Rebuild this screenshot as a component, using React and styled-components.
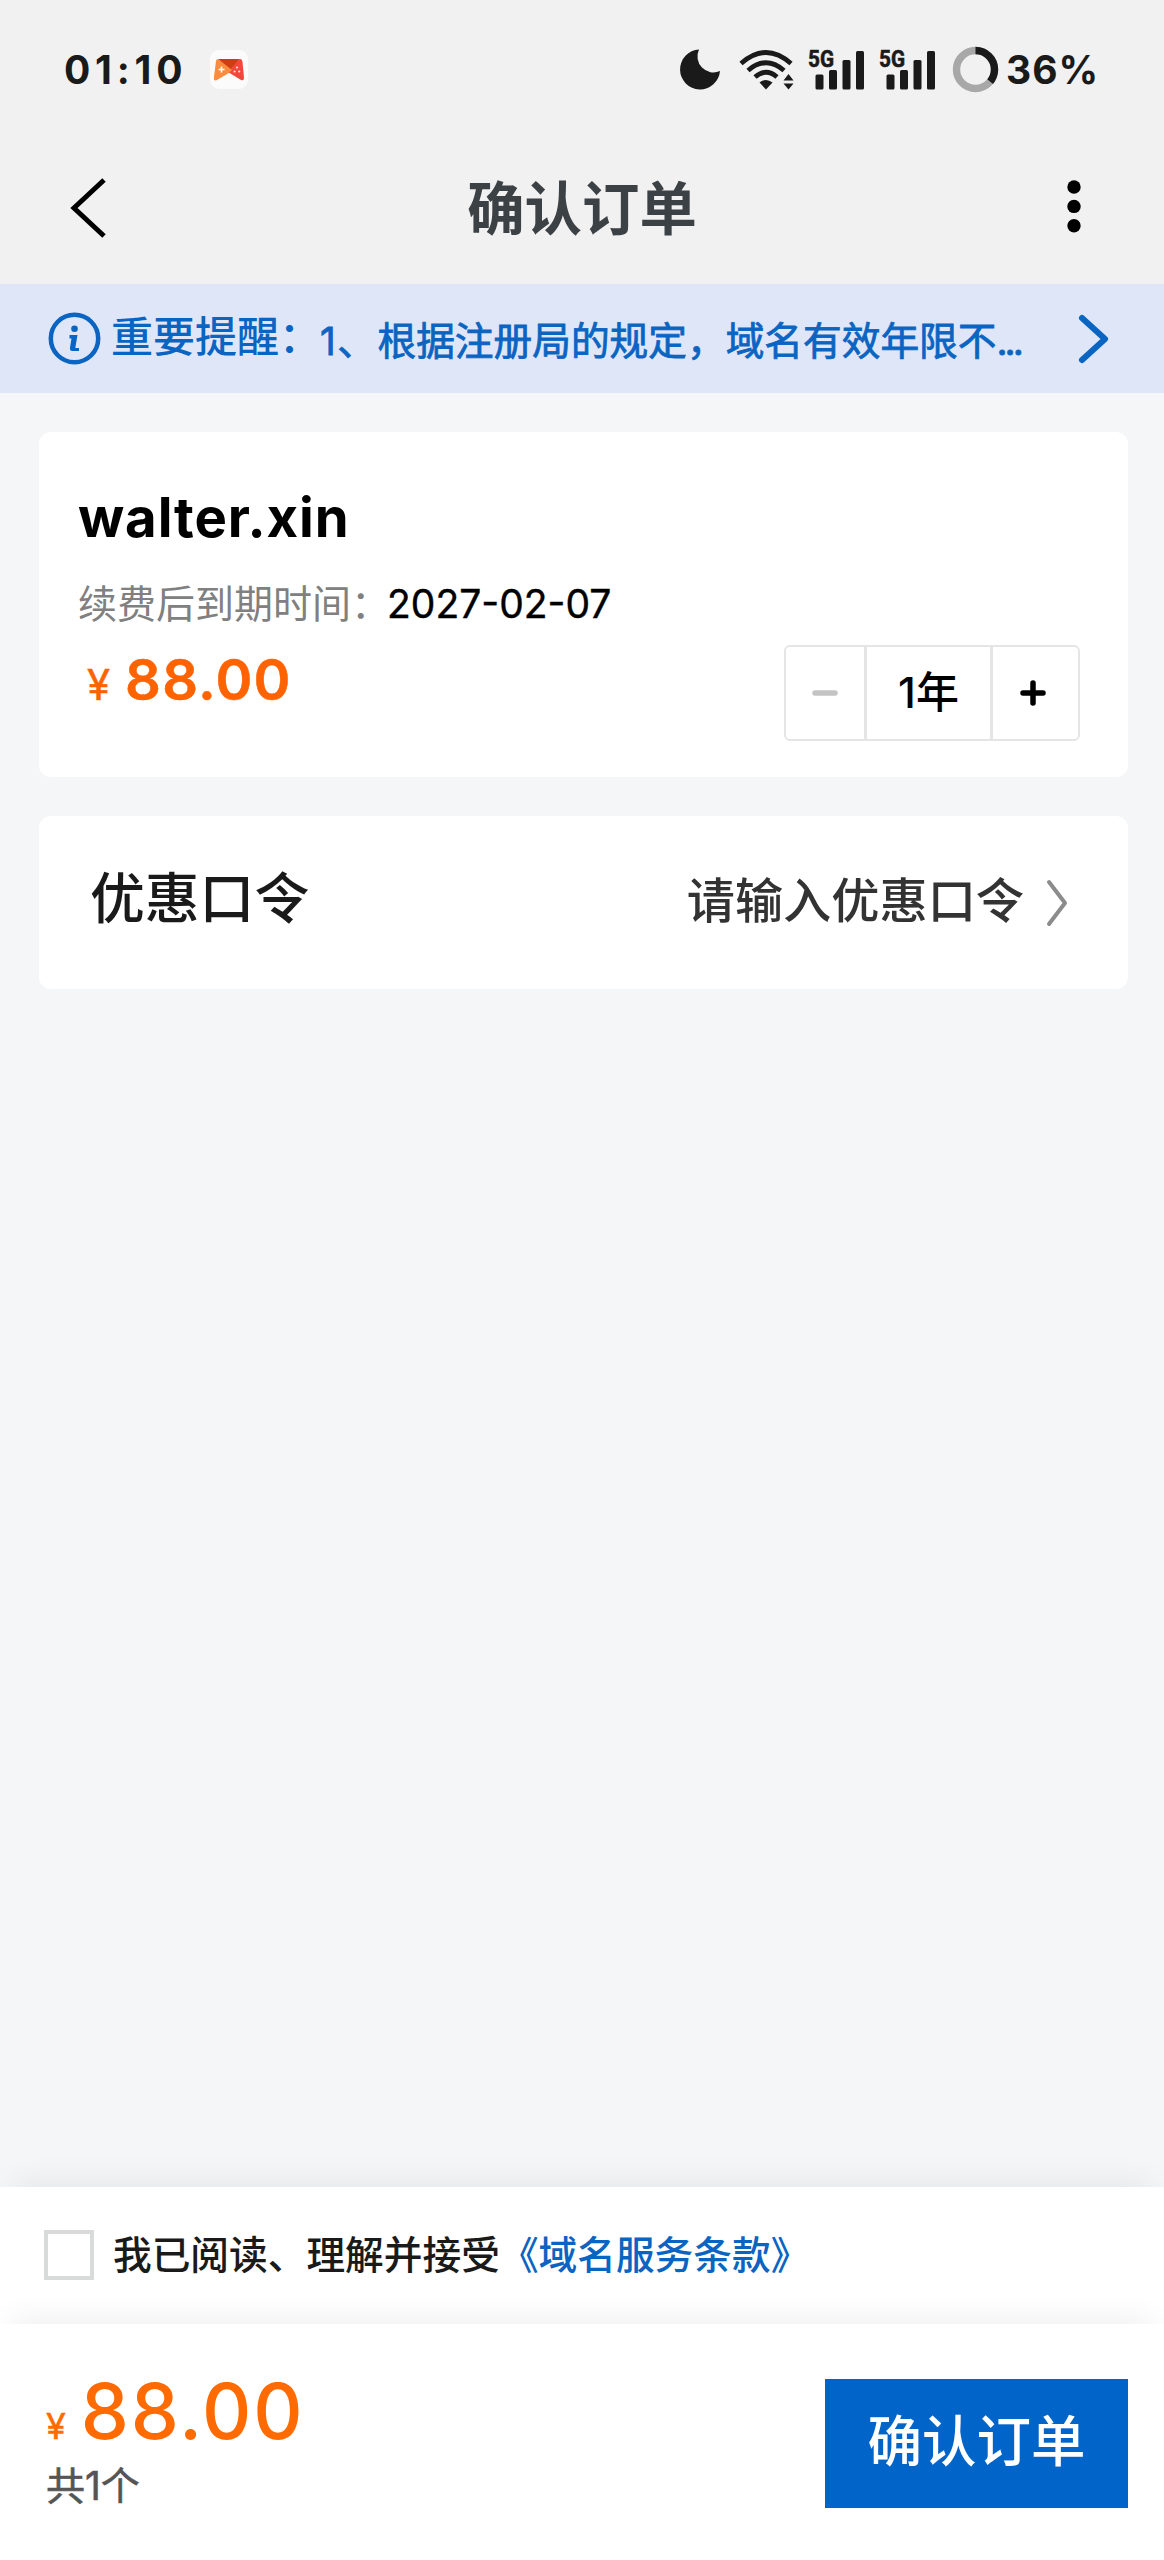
import React, { useState } from "react";
import styled, { createGlobalStyle } from "styled-components";

const GlobalStyle = createGlobalStyle`
  * {
    box-sizing: border-box;
  }
  body {
    margin: 0;
    background: #f5f6f8;
    font-family: Inter, "Noto Sans CJK SC", sans-serif;
    color: #1a1a1a;
  }
  button {
    border: none;
    padding: 0;
    background: none;
    font-family: inherit;
    color: inherit;
  }
  svg {
    display: block;
    flex: none;
    overflow: visible;
  }
`;

const Page = styled.div`
  display: flex;
  flex-direction: column;
  height: 2560px;
  background: #f5f6f8;
`;

const Header = styled.header`
  background: #f1f1f1;
`;

const StatusBar = styled.div`
  display: flex;
  align-items: center;
  justify-content: space-between;
  height: 139px;
  padding: 0 66px 0 64px;
`;

const StatusGroup = styled.div`
  display: flex;
  align-items: center;
`;

const Clock = styled.span`
  width: 146px;
  font-size: 39px;
  font-weight: 700;
  letter-spacing: 4.8px;
  line-height: 46px;
  white-space: nowrap;
`;

const Battery = styled.span`
  width: 92px;
  margin-left: 8px;
  font-size: 39px;
  font-weight: 700;
  letter-spacing: 1px;
  line-height: 46px;
  white-space: nowrap;
`;

const Signal = styled.svg`
  margin-left: ${(props) => props.$gap}px;
`;

const TitleBar = styled.div`
  display: flex;
  align-items: center;
  justify-content: space-between;
  height: 145px;
  padding: 0 83px 8px 70px;
`;

const Title = styled.h1`
  margin: 3px 9px 0 0;
  font-size: 57.4px;
  font-weight: 700;
  line-height: 70px;
  color: #3b4145;
`;

const Notice = styled.div`
  display: flex;
  align-items: center;
  height: 109px;
  padding: 0 56px 0 48px;
  background: #dfe6f7;
  color: #0a64c2;
`;

const NoticeLabel = styled.span`
  margin: 0 0 4px 10px;
  font-size: 42px;
  font-weight: 500;
  line-height: 56px;
  white-space: nowrap;
`;

const NoticeText = styled.span`
  flex: 1;
  margin: 4px 0 0 -1px;
  font-size: 38.7px;
  font-weight: 400;
  line-height: 56px;
  white-space: nowrap;
  -webkit-text-stroke: 0.8px currentColor;
`;

const Tracked = styled.span`
  letter-spacing: ${(props) => props.$space}px;
`;

const Main = styled.main`
  flex: 1;
  display: flex;
  flex-direction: column;
  gap: 39px;
  padding: 39px 36px 0 39px;
`;

const Card = styled.section`
  border-radius: 12px;
  background: #fff;
`;

const DomainCard = styled(Card)`
  height: 345px;
  padding: 52px 48px 0 39px;
`;

const DomainName = styled.h2`
  margin: 0;
  font-size: 54.5px;
  font-weight: 700;
  letter-spacing: 0.9px;
  line-height: 66px;
  color: #000;
`;

const Expiry = styled.p`
  display: flex;
  margin: 27px 0 0;
  font-size: 39px;
  line-height: 54px;
  color: #808080;
`;

const ExpiryDate = styled.span`
  margin-left: -3px;
  font-weight: 400;
  color: #000;
  -webkit-text-stroke: 0.4px currentColor;
`;

const PriceRow = styled.div`
  display: flex;
  justify-content: space-between;
  align-items: flex-start;
  margin-top: 14px;
`;

const Price = styled.div`
  display: flex;
  align-items: baseline;
  padding: 2px 0 0 9px;
  font-size: 56px;
  font-weight: 600;
  letter-spacing: 1.2px;
  line-height: 66px;
  color: #ff6300;
  -webkit-text-stroke: 0.5px currentColor;
`;

const Yen = styled.span`
  margin-right: ${(props) => props.$gap}px;
  font-size: ${(props) => props.$size}px;
  font-weight: 400;
  letter-spacing: 0;
  -webkit-text-stroke: 0.5px currentColor;
`;

const Stepper = styled.div`
  display: flex;
  width: 296px;
  height: 96px;
  border: 2px solid #e5e5e5;
  border-radius: 6px;
`;

const StepButton = styled.button`
  display: flex;
  align-items: center;
  justify-content: center;
  width: ${(props) => props.$width}px;
  color: ${(props) => (props.disabled ? "#c4c4c4" : "#000")};
`;

const PlusButton = styled(StepButton)`
  padding-right: 5px;
`;

const Years = styled.div`
  flex: 1;
  border: solid #e5e5e5;
  border-width: 0 3px;
  font-size: 43px;
  font-weight: 500;
  line-height: 91px;
  text-align: center;
  color: #000;
`;

const CouponCard = styled(Card)`
  display: flex;
  align-items: center;
  height: 173px;
  padding: 0 60px 0 51px;
`;

const CouponLabel = styled.span`
  flex: 1;
  margin-bottom: 10px;
  font-size: 54.8px;
  font-weight: 500;
  line-height: 70px;
`;

const CouponHint = styled.span`
  margin: 0 22px 3px 0;
  font-size: 48.2px;
  font-weight: 500;
  line-height: 64px;
  color: #333;
`;

const Panel = styled.div`
  position: relative;
  display: flex;
  align-items: center;
  height: ${(props) => props.$height}px;
  background: #fff;
  box-shadow: 0 -16px 30px -12px rgba(0, 0, 0, 0.07);
`;

const AgreePanel = styled(Panel)`
  padding: 0 0 2px 44px;
`;

const Checkbox = styled.button`
  width: 50px;
  height: 50px;
  border: 4px solid #d9dbdb;
  background: ${(props) => (props.$checked ? "#0064c8" : "#fff")};
`;

const AgreeText = styled.span`
  margin-left: 19px;
  font-size: 38.7px;
  font-weight: 500;
  line-height: 54px;
  white-space: nowrap;
`;

const TermsLink = styled.a`
  color: #0a64c2;
`;

const PayPanel = styled(Panel)`
  align-items: flex-start;
  justify-content: space-between;
  padding: 55px 36px 0 46px;
`;

const Total = styled.div`
  display: flex;
  align-items: baseline;
  font-size: 76.5px;
  font-weight: 500;
  letter-spacing: 1.8px;
  line-height: 64px;
  color: #ff6b00;
`;

const Count = styled.div`
  margin-top: 1px;
  font-size: 39px;
  line-height: 54px;
  color: #555;
  -webkit-text-stroke: 0.6px currentColor;
`;

const ConfirmButton = styled.button`
  width: 303px;
  height: 129px;
  padding-bottom: 5px;
  background: #0064c8;
  color: #fff;
  font-size: 54.5px;
  font-weight: 500;
  line-height: 70px;
`;

const GameIcon = () => (
  <svg width="38" height="39" viewBox="0 0 38 39">
    <rect width="38" height="39" rx="9" fill="#fbfbfb" />
    <path d="M30 9Q32 9 32.500 12L34 28Q34 31 31 30L18 22L25 14Z" fill="#f4473c" />
    <path d="M8 9H30L20 20Z" fill="#cf3d12" />
    <path d="M8 9L22 20L18 23.500L6 30.500Q3.500 31 4 27L6 11Q6.500 9 8 9Z" fill="#fb8b3e" />
    <path d="M11.500 16.500V22.500M8.500 19.500H14.500" stroke="#fff" strokeWidth="1.600" />
    <g fill="#ffe4df">
      <circle cx="27" cy="17.500" r="1.100" />
      <circle cx="24.600" cy="21.500" r="1.100" />
      <circle cx="29.200" cy="21.500" r="1.100" />
    </g>
  </svg>
);

const MoonIcon = () => (
  <svg width="41" height="41" viewBox="0 0 41 41">
    <path d="M19 0.500A16 16 0 0 0 40 22A20 20 0 1 1 19 0.500Z" fill="#1a1a1a" />
  </svg>
);

const Wifi = styled.svg`
  margin-left: 18px;
`;

const WifiIcon = () => (
  <Wifi width="56" height="40" viewBox="0 0 56 40">
    <g fill="none" stroke="#1a1a1a" strokeWidth="4.800">
      <path d="M2 13.500Q27 -8.500 52 13.500" />
      <path d="M9 20.500Q27 5 45 20.500" />
      <path d="M16 27Q27 17.500 38 27" />
    </g>
    <path d="M20.500 32.500Q27 27.500 33.500 32.500L27 39.500Z" fill="#1a1a1a" />
    <path d="M44.500 30.500L49.500 24L54.500 30.500ZM44.500 33.500H54.500L49.500 39.500Z" fill="#1a1a1a" />
  </Wifi>
);

const SignalIcon = ({ gap }) => (
  <Signal $gap={gap} width="56" height="50" viewBox="0 -4 56 50">
    <text
      x="-1"
      y="18"
      fontFamily="Roboto"
      fontSize="23.500"
      fontWeight="700"
      textLength="26"
      lengthAdjust="spacingAndGlyphs"
      fill="#1a1a1a"
      stroke="#1a1a1a"
      strokeWidth="0.600"
    >
      5G
    </text>
    <g fill="#1a1a1a">
      <rect x="6.500" y="25.500" width="8" height="15" rx="1.500" />
      <rect x="20" y="21" width="8" height="19.500" rx="1.500" />
      <rect x="33.500" y="11" width="8" height="29.500" rx="1.500" />
      <rect x="47" y="2" width="8" height="38.500" rx="1.500" />
    </g>
  </Signal>
);

const Ring = styled.svg`
  margin-left: 17px;
`;

const BatteryRing = () => (
  <Ring width="45" height="45" viewBox="0 0 45 45">
    <circle cx="22.500" cy="22.500" r="19" fill="none" stroke="#a8a8a8" strokeWidth="7.400" />
    <circle
      cx="22.500"
      cy="22.500"
      r="19"
      fill="none"
      stroke="#1a1a1a"
      strokeWidth="7.400"
      pathLength="100"
      strokeDasharray="36 64"
      transform="rotate(-90 22.500 22.500)"
    />
  </Ring>
);

const BackIcon = () => (
  <svg width="36" height="60" viewBox="0 0 36 60">
    <path d="M34 2L4 30L34 58" fill="none" stroke="#000" strokeWidth="5" />
  </svg>
);

const MoreIcon = () => (
  <svg width="14" height="54" viewBox="0 0 14 54">
    <circle cx="7" cy="6" r="6.700" />
    <circle cx="7" cy="25.400" r="6.700" />
    <circle cx="7" cy="44.800" r="6.700" />
  </svg>
);

const InfoIcon = () => (
  <svg width="53" height="53" viewBox="0 0 53 53">
    <circle cx="26.500" cy="26.500" r="23.700" fill="none" stroke="#0a64c2" strokeWidth="4.500" />
    <circle cx="26.500" cy="16.700" r="3.300" fill="#0a64c2" />
    <path d="M21.500 23H29.500L27.300 36H31V39H24.500Q21.500 39 22 35.500L23.500 26.500H21.500Z" fill="#0a64c2" />
  </svg>
);

const Chevron = ({ width, height, color, stroke }) => (
  <svg width={width} height={height} viewBox={`0 0 ${width} ${height}`}>
    <path
      d={`M3 3L${width - 3} ${height / 2}L3 ${height - 3}`}
      fill="none"
      stroke={color}
      strokeWidth={stroke}
      strokeLinecap="round"
      strokeLinejoin="round"
    />
  </svg>
);

const App = () => {
  const [years, setYears] = useState(1);
  const [agreed, setAgreed] = useState(false);
  const amount = (years * 88).toFixed(2);

  return (
    <Page>
      <GlobalStyle />
      <Header>
        <StatusBar>
          <StatusGroup>
            <Clock>01:10</Clock>
            <GameIcon />
          </StatusGroup>
          <StatusGroup>
            <MoonIcon />
            <WifiIcon />
            <SignalIcon gap={14} />
            <SignalIcon gap={15} />
            <BatteryRing />
            <Battery>36%</Battery>
          </StatusGroup>
        </StatusBar>
        <TitleBar>
          <BackIcon />
          <Title>确认订单</Title>
          <MoreIcon />
        </TitleBar>
      </Header>
      <Notice>
        <InfoIcon />
        <NoticeLabel>重要提醒：</NoticeLabel>
        <NoticeText>
          <Tracked $space={1.5}>1、</Tracked>根据注册局的规定，域名有效年限不<Tracked $space={-3}>...</Tracked>
        </NoticeText>
        <Chevron width={29} height={48} color="#0a64c2" stroke={6} />
      </Notice>
      <Main>
        <DomainCard>
          <DomainName>walter.xin</DomainName>
          <Expiry>
            续费后到期时间：<ExpiryDate>{2026 + years}-02-07</ExpiryDate>
          </Expiry>
          <PriceRow>
            <Price>
              <Yen $size={42} $gap={15}>¥</Yen>
              {amount}
            </Price>
            <Stepper>
              <StepButton $width={78} disabled={years === 1} onClick={() => setYears(years - 1)}>
                <svg width="26" height="26" viewBox="0 0 26 26">
                  <path d="M3 13H23" stroke="currentColor" strokeWidth="5.500" strokeLinecap="round" />
                </svg>
              </StepButton>
              <Years>{years}年</Years>
              <PlusButton $width={85} onClick={() => setYears(years + 1)}>
                <svg width="26" height="26" viewBox="0 0 26 26">
                  <path d="M3 13H23M13 3V23" stroke="currentColor" strokeWidth="5.500" strokeLinecap="round" />
                </svg>
              </PlusButton>
            </Stepper>
          </PriceRow>
        </DomainCard>
        <CouponCard>
          <CouponLabel>优惠口令</CouponLabel>
          <CouponHint>请输入优惠口令</CouponHint>
          <Chevron width={22} height={48} color="#8c8c8c" stroke={4} />
        </CouponCard>
      </Main>
      <AgreePanel $height={137}>
        <Checkbox $checked={agreed} onClick={() => setAgreed(!agreed)} />
        <AgreeText>
          我已阅读、理解并接受<TermsLink>《域名服务条款》</TermsLink>
        </AgreeText>
      </AgreePanel>
      <PayPanel $height={236}>
        <div>
          <Total>
            <Yen $size={36} $gap={15}>¥</Yen>
            {amount}
          </Total>
          <Count>共1个</Count>
        </div>
        <ConfirmButton>确认订单</ConfirmButton>
      </PayPanel>
    </Page>
  );
};

export default App;
